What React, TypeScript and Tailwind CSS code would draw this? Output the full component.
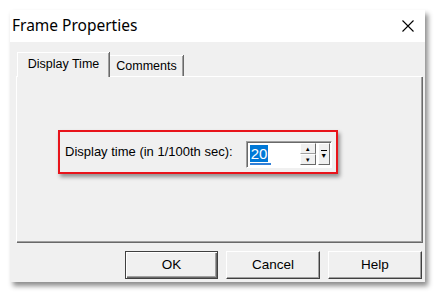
const ui = { fontFamily: '"Liberation Sans", Arial, sans-serif' };

function Tab({ label, active }: { label: string; active?: boolean }) {
  if (active) {
    return (
      <div className="relative z-10 -mb-px flex h-[25px] w-[92px] items-center justify-center border-l border-t border-white bg-[#f0f0f0] shadow-[inset_-1px_0_0_#a0a0a0,1px_0_0_#696969] text-[12.5px] text-black pb-[2px]">
        {label}
      </div>
    );
  }
  return (
    <div className="mt-[3px] flex h-[21px] w-[74px] items-center justify-center border-l border-t border-white bg-[#f0f0f0] shadow-[inset_-1px_0_0_#a0a0a0,1px_0_0_#696969] text-[12.5px] text-black">
      {label}
    </div>
  );
}

function SpinInput() {
  return (
    <div className="flex h-[27px] w-[86px] items-center border border-t-[#a0a0a0] border-l-[#a0a0a0] border-r-white border-b-white bg-white shadow-[inset_1px_1px_0_#696969]">
      <div className="relative ml-[3px] flex-1">
        <span className="bg-[#0078d7] px-[1px] text-[15px] leading-[17px] text-white">20</span>
        <div className="absolute left-0 top-[21px] h-[2px] w-[21px] bg-[#2f7fd8]" />
      </div>
      <div className="flex flex-col">
        <div className="flex h-[11px] w-[16px] items-center justify-center border border-t-white border-l-white border-r-[#696969] border-b-[#a0a0a0] bg-[#f0f0f0] text-[6px] leading-none">▲</div>
        <div className="flex h-[11px] w-[16px] items-center justify-center border border-t-white border-l-white border-r-[#696969] border-b-[#696969] bg-[#f0f0f0] text-[6px] leading-none">▼</div>
      </div>
      <div className="ml-[2px] mr-[1px] flex h-[22px] w-[12px] flex-col items-center justify-center border border-t-white border-l-white border-r-[#696969] border-b-[#696969] bg-[#f0f0f0]">
        <div className="mb-[1px] h-px w-[6px] bg-black" />
        <div className="text-[7px] leading-none">▼</div>
      </div>
    </div>
  );
}

function Button({ label, primary }: { label: string; primary?: boolean }) {
  return (
    <div
      className={
        primary
          ? 'flex h-[28px] w-[93px] items-center justify-center border border-[#404040] bg-[#f0f0f0] shadow-[inset_1px_1px_0_#fff,inset_-1px_-1px_0_#696969,inset_-2px_-2px_0_#a0a0a0] text-[13.5px] text-black'
          : 'flex h-[28px] w-[94px] items-center justify-center border border-t-white border-l-white border-r-[#404040] border-b-[#404040] bg-[#f0f0f0] shadow-[inset_-1px_-1px_0_#a0a0a0] text-[13.5px] text-black'
      }
    >
      {label}
    </div>
  );
}

export default function App() {
  return (
    <div className="h-[294px] w-[437px] bg-white pl-[10px] pt-[10px]" style={ui}>
      <div className="flex h-[272px] w-[415px] flex-col bg-[#f0f0f0] shadow-[3px_4px_5px_rgba(0,0,0,0.45)]">
        <div className="flex h-[32px] items-center justify-between bg-white pl-[2px] pr-[11px]">
          <span className="text-[15.5px] text-black" style={{ fontFamily: '"Noto Sans", "Liberation Sans", sans-serif' }}>
            Frame Properties
          </span>
          <svg width="12" height="12" viewBox="0 0 12 12" className="text-black">
            <path d="M0.5 0.5 L11.5 11.5 M11.5 0.5 L0.5 11.5" stroke="currentColor" strokeWidth="1.1" />
          </svg>
        </div>

        <div className="mt-[10px] flex pl-[7px]">
          <Tab label="Display Time" active />
          <Tab label="Comments" />
        </div>

        <div className="ml-[6px] mr-[3px] h-[166px] border-l border-t border-white shadow-[inset_-1px_-1px_0_#a0a0a0,1px_1px_0_#696969] pl-[41px] pt-[53px]">
          <div className="flex h-[44px] w-[280px] items-center border-2 border-[#e8141b] pl-[5px] shadow-[2px_3px_4px_rgba(0,0,0,0.4)]">
            <span className="text-[13px] text-black">Display time (in 1/100th sec):</span>
            <div className="ml-[13px] mt-[4px]">
              <SpinInput />
            </div>
          </div>
        </div>

        <div className="mt-[9px] flex justify-end gap-[8px] pr-[3px]">
          <Button label="OK" primary />
          <Button label="Cancel" />
          <Button label="Help" />
        </div>
      </div>
    </div>
  );
}
